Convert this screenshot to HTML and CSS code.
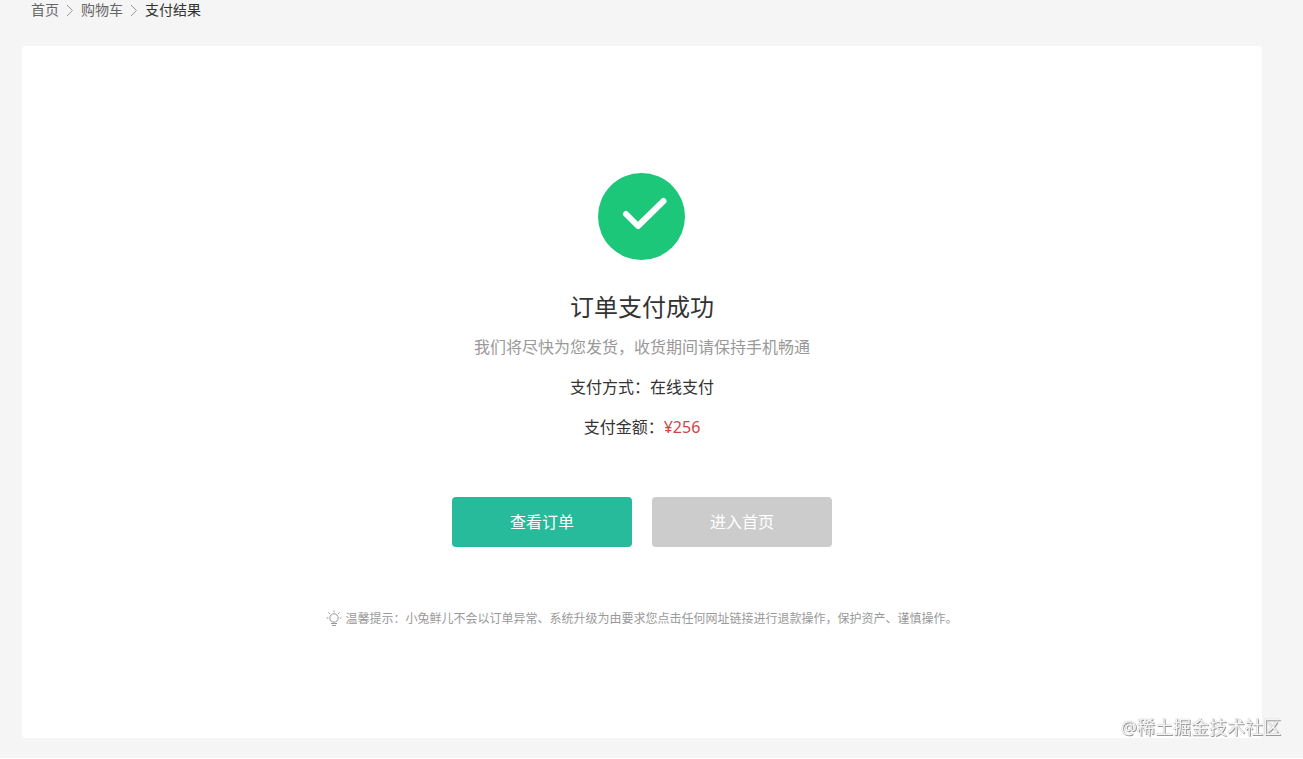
FILE: index.html
```html
<!DOCTYPE html>
<html lang="zh-CN">

<head>
  <meta charset="UTF-8">
  <meta name="viewport" content="width=device-width, initial-scale=1.0">
  <title>支付结果</title>
  <link rel="stylesheet" href="styles.css">
</head>

<body>
  <div class="pay-page">
    <div class="container">
      <nav class="bread">
        <a href="#">首页</a>
        <svg class="arrow" viewBox="0 0 8 12"><path d="M1 1L6.5 6.5L1 12" /></svg>
        <a href="#">购物车</a>
        <svg class="arrow" viewBox="0 0 8 12"><path d="M1 1L6.5 6.5L1 12" /></svg>
        <span>支付结果</span>
      </nav>
      <main class="pay-result">
        <svg class="icon-success" viewBox="0 0 88 88">
          <circle cx="43.5" cy="43.5" r="43.5" />
          <path d="M28 41L40 53L65.5 28" />
        </svg>
        <h1 class="title">订单支付成功</h1>
        <p class="desc">我们将尽快为您发货，收货期间请保持手机畅通</p>
        <p>支付方式：<span>在线支付</span></p>
        <p>支付金额：<span class="red">¥256</span></p>
        <div class="btns">
          <button type="button" class="btn primary">查看订单</button>
          <button type="button" class="btn gray">进入首页</button>
        </div>
        <div class="alert">
          <svg class="icon-tip" viewBox="0 0 16 16">
            <circle cx="8" cy="7" r="4.2" />
            <path d="M8 -0.5V1.2M2.5 1.5L4 3M13.5 1.5L12 3M0.5 7H2.3M13.7 7H15.5M5 12.5H11M6 14.5H10" />
          </svg>
          <span>温馨提示：小兔鲜儿不会以订单异常、系统升级为由要求您点击任何网址链接进行退款操作，保护资产、谨慎操作。</span>
        </div>
      </main>
    </div>
  </div>
  <div class="watermark">@稀土掘金技术社区</div>
</body>

</html>
```

FILE: styles.css
```css
* {
  margin: 0;
  padding: 0;
  box-sizing: border-box;
}

body {
  font-family: "Noto Sans", "Noto Sans CJK SC", sans-serif;
  font-size: 16px;
  color: #333;
  background: #fff;
}

a {
  color: #666;
  text-decoration: none;
}

.pay-page {
  padding: 0 41px 20px 22px;
  background: #f5f5f5;
}

.container {
  max-width: 1240px;
  margin: 0 auto;
}

.bread {
  display: flex;
  align-items: center;
  gap: 7px;
  padding: 0 9px 26px;
  font-size: 14px;
  line-height: 20px;
}

.arrow {
  width: 8px;
  height: 12px;
  fill: none;
  stroke: #999;
}

.pay-result {
  display: flex;
  flex-direction: column;
  align-items: center;
  padding: 127px 20px 108px;
  border-radius: 4px;
  background: #fff;
  text-align: center;
  line-height: 40px;
}

.icon-success {
  width: 88px;
  height: 88px;
  margin-bottom: 26px;
  fill: #1dc779;
}

.icon-success path {
  fill: none;
  stroke: #fff;
  stroke-width: 6;
  stroke-linecap: round;
  stroke-linejoin: round;
}

.title {
  font-size: 24px;
  font-weight: 400;
}

.desc {
  color: #999;
}

.red {
  color: #cf4444;
}

.btns {
  display: flex;
  gap: 20px;
  margin: 50px 0 61px;
}

.btn {
  width: 180px;
  height: 50px;
  border: none;
  border-radius: 4px;
  font: inherit;
  color: #fff;
  cursor: pointer;
}

.primary {
  background: #27ba9b;
}

.gray {
  background: #ccc;
}

.alert {
  display: flex;
  align-items: center;
  gap: 3px;
  font-size: 12px;
  line-height: 22px;
  color: #999;
}

.icon-tip {
  width: 16px;
  height: 16px;
  overflow: visible;
  fill: none;
  stroke: #999;
}

.watermark {
  position: fixed;
  right: 22px;
  bottom: 18px;
  font-size: 18px;
  line-height: 28px;
  color: #f5f5f5;
  text-shadow: 0 0 1px #999, 1px 1px 0 #999;
}
```
